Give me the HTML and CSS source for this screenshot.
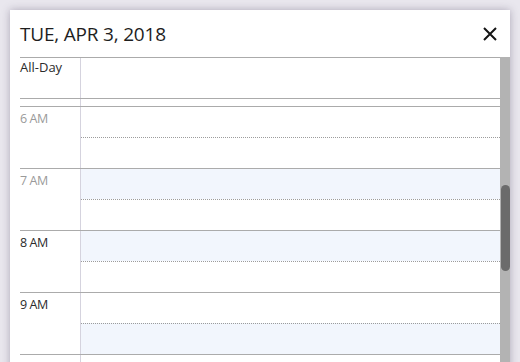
FILE: index.html
```html
<!DOCTYPE html>
<html>
<head>
    <title>Day View</title>
    <link rel="stylesheet" href="styles.css">
</head>
<body>
    <div class="dialog">
        <div class="header">
            <h1 class="title">TUE, APR 3, 2018</h1>
            <button class="close" title="Close">
                <svg width="14" height="14" viewBox="0 0 14 14">
                    <path d="M1 1 L13 13 M13 1 L1 13" stroke="#141414" stroke-width="2" fill="none"/>
                </svg>
            </button>
        </div>

        <div class="body">
            <div class="grid">
                <div class="row allday">
                    <div class="label">All-Day</div>
                    <div class="slots"></div>
                </div>
                <div class="row spacer">
                    <div class="label"></div>
                    <div class="slots"></div>
                </div>

                <div class="row hour">
                    <div class="label off">6 AM</div>
                    <div class="slots">
                        <div class="half"></div>
                        <div class="half"></div>
                    </div>
                </div>
                <div class="row hour">
                    <div class="label off">7 AM</div>
                    <div class="slots">
                        <div class="half work"></div>
                        <div class="half"></div>
                    </div>
                </div>
                <div class="row hour">
                    <div class="label">8 AM</div>
                    <div class="slots">
                        <div class="half work"></div>
                        <div class="half"></div>
                    </div>
                </div>
                <div class="row hour">
                    <div class="label">9 AM</div>
                    <div class="slots">
                        <div class="half"></div>
                        <div class="half work"></div>
                    </div>
                </div>
                <div class="row hour">
                    <div class="label">10 AM</div>
                    <div class="slots">
                        <div class="half"></div>
                        <div class="half"></div>
                    </div>
                </div>
            </div>

            <div class="scrollbar">
                <div class="thumb"></div>
            </div>
        </div>
    </div>
</body>
</html>
```

FILE: styles.css
```css
html, body {
    height: 100%;
}

body {
    margin: 0;
    padding: 10px;
    box-sizing: border-box;
    background: #e9e7ee;
    font-family: "Open Sans", "Noto Sans", sans-serif;
    overflow: hidden;
}

.dialog {
    width: 500px;
    background: white;
    box-shadow: 0 0 8px rgba(60, 50, 80, 0.35);
}

.header {
    height: 47px;
    display: flex;
    align-items: center;
    justify-content: space-between;
    padding: 0 13px 0 10px;
}

.title {
    margin: 0;
    font-size: 19px;
    font-weight: normal;
    color: #1e1e1e;
    letter-spacing: -0.2px;
}

.close {
    border: none;
    background: none;
    padding: 0;
    margin-top: 1px;
    width: 14px;
    height: 14px;
    cursor: pointer;
}

.close svg {
    display: block;
}

.body {
    display: flex;
    margin-left: 10px;
}

.grid {
    flex: 1;
}

.row {
    display: flex;
    border-top: 1px solid #ababab;
}

.label {
    width: 60px;
    box-sizing: border-box;
    padding-top: 3px;
    font-size: 12.5px;
    line-height: 16px;
    color: #2b2b2b;
    letter-spacing: -0.4px;
}

.label.off {
    color: #9a9a9a;
}

.slots {
    flex: 1;
    border-left: 1px solid #d5d3de;
}

.allday {
    height: 40px;
}

.allday .label {
    padding-top: 1px;
    font-size: 13px;
    letter-spacing: 0;
}

.spacer {
    height: 7px;
}

.hour {
    height: 61px;
}

.hour .label {
    padding-top: 4px;
}

.half {
    height: 30px;
}

.half + .half {
    border-top: 1px dotted #9c9c9c;
}

.half.work {
    background: #f2f6fd;
}

.scrollbar {
    width: 10px;
    background: #b3b3b3;
}

.thumb {
    margin-top: 128px;
    height: 86px;
    width: 9px;
    margin-left: 1px;
    border-radius: 5px;
    background: #6b6b6b;
}
```
